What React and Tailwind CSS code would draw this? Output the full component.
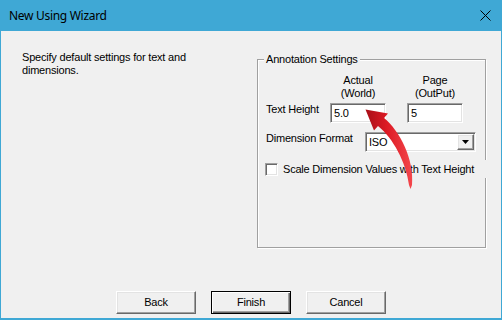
const raised =
  "bg-[#f0f0f0] border border-t-white border-l-white border-r-[#696969] border-b-[#696969] shadow-[inset_-1px_-1px_0_#a0a0a0,inset_1px_1px_0_#e3e3e3]";
const sunken =
  "bg-white border border-t-[#a0a0a0] border-l-[#a0a0a0] border-r-white border-b-white shadow-[inset_1px_1px_0_#696969,inset_-1px_-1px_0_#e3e3e3]";

const Arrow = () => (
  <svg
    className="absolute left-[340px] top-[100px] z-20 pointer-events-none"
    width="90"
    height="95"
    viewBox="0 0 90 95"
  >
    <defs>
      <linearGradient id="red" x1="0" y1="0" x2="1" y2="0">
        <stop offset="0" stopColor="#a80f18" />
        <stop offset="0.45" stopColor="#dc1a24" />
        <stop offset="1" stopColor="#f4474c" />
      </linearGradient>
    </defs>
    <path
      d="M25.5 9.4 L48 13.5 L44 18 C60 31 74.5 60 72 85 L70.5 89 L69 85 C66 62 53 38 38 26 L34 30.5 Z"
      fill="url(#red)"
    />
  </svg>
);

export default function App() {
  return (
    <div className="relative w-[502px] h-[320px] bg-[#3fa8d5] flex flex-col px-[1px] pb-[2px] font-['Liberation_Sans',Arial,sans-serif] text-[11px] tracking-[-0.2px] text-black">
      {/* title bar */}
      <div className="h-[31px] shrink-0 flex items-center justify-between pl-[8px] pr-[10px]">
        <span className="font-['Noto_Sans',sans-serif] text-[12px] tracking-[-0.3px]">
          New Using Wizard
        </span>
        <svg width="11" height="11" viewBox="0 0 11 11">
          <path d="M0.5 0.5 L10.5 10.5 M10.5 0.5 L0.5 10.5" stroke="#000" strokeWidth="1" />
        </svg>
      </div>

      {/* body */}
      <div className="flex-1 bg-[#f0f0f0] flex flex-col">
        <div className="flex">
          <div className="w-[256px] pl-[21px] pt-[20px] leading-[13px]">
            <p className="w-[205px]">Specify default settings for text and dimensions.</p>
          </div>

          {/* group box */}
          <div className="relative mt-[28px] w-[229px] h-[189px] border border-[#a0a0a0] shadow-[inset_1px_1px_0_#fff,1px_1px_0_#fff] pl-[8px] leading-[13px]">
            <span className="absolute left-[6px] -top-[7px] px-[2px] bg-[#f0f0f0]">
              Annotation Settings
            </span>

            <div className="flex mt-[14px]">
              <div className="w-[64px]" />
              <div className="w-[56px] text-center">
                Actual
                <br />
                (World)
              </div>
              <div className="w-[56px] ml-[21px] text-center">
                Page
                <br />
                (OutPut)
              </div>
            </div>

            <div className="flex items-start mt-[3px]">
              <div className="w-[64px]">Text Height</div>
              <div className={`w-[56px] h-[20px] flex items-center pl-[3px] ${sunken}`}>5.0</div>
              <div className={`w-[56px] h-[20px] ml-[21px] flex items-center pl-[3px] ${sunken}`}>5</div>
            </div>

            <div className="flex items-start mt-[9px]">
              <div className="w-[99px]">Dimension Format</div>
              <div className={`w-[111px] h-[20px] flex items-center justify-between pl-[3px] pr-[1px] ${sunken}`}>
                <span>ISO</span>
                <div className={`w-[17px] h-[16px] flex items-center justify-center ${raised}`}>
                  <svg width="7" height="4" viewBox="0 0 7 4">
                    <path d="M0 0 H7 L3.5 4 Z" fill="#000" />
                  </svg>
                </div>
              </div>
            </div>

            <div className="relative flex items-center mt-[8px] -ml-[1px] w-[226px] h-[18px] bg-[#f0f0f0]">
              <div className={`w-[13px] h-[13px] ${sunken}`} />
              <span className="ml-[5px] whitespace-nowrap">Scale Dimension Values with Text Height</span>
            </div>
          </div>
        </div>

        {/* buttons */}
        <div className="flex justify-center gap-[15px] mt-[43px]">
          <button className={`w-[80px] h-[23px] ${raised}`}>Back</button>
          <button className="w-[80px] h-[23px] bg-[#f0f0f0] border border-black shadow-[inset_1px_1px_0_#fff,inset_-1px_-1px_0_#696969,inset_-2px_-2px_0_#a0a0a0]">
            Finish
          </button>
          <button className={`w-[80px] h-[23px] ${raised}`}>Cancel</button>
        </div>
      </div>

      <Arrow />
    </div>
  );
}
